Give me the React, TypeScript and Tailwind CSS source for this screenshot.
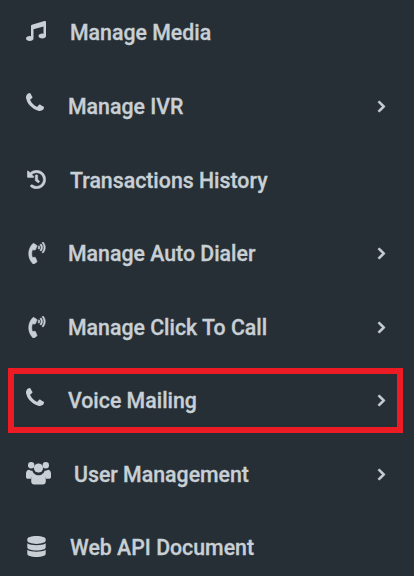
import { FaChevronRight, FaDatabase, FaHistory, FaMusic, FaPhoneVolume } from "react-icons/fa";

const PhoneIcon = () => (
  <svg width="18" height="18" viewBox="0 0 1408 1408" fill="currentColor">
    <path d="M1408 1112q0 27-10 70.5t-21 68.5q-21 50-122 106-94 51-186 51-27 0-53-3.5t-57.5-12.5-47-14.5-55.5-20.5-49-18q-98-35-175-83-127-79-264-216t-216-264q-48-77-83-175-3-9-18-49t-20.5-55.5-14.5-47-12.5-57.5-3.5-53q0-92 51-186 56-101 106-122 25-11 68.5-21t70.5-10q14 0 21 3 18 6 53 76 11 19 30 54t35 63.5 31 53.5q3 4 17.5 25t21.5 35.5 7 28.5q0 20-28.5 50t-62 55-62 53-28.5 46q0 9 5 22.5t8.5 20.5 14 24 11.5 19q76 137 174 235t235 174q2 1 19 11.5t24 14 20.5 8.5 22.5 5q18 0 46-28.5t53-62 55-62 50-28.5q14 0 28.5 7t35.5 21.5 25 17.5q25 15 53.5 31t63.5 35 54 30q70 35 76 53 3 7 3 21z" />
  </svg>
);

const UsersIcon = () => (
  <svg width="25" height="23" viewBox="0 0 25 23" fill="currentColor">
    <circle cx="5.2" cy="3.2" r="3.2" />
    <circle cx="19.8" cy="3.2" r="3.2" />
    <circle cx="12.5" cy="6" r="4.6" />
    <path d="M0 11.5c0-2.5 1.5-3.8 3-3.8 1 .8 2.2 1.2 3.4 1 .4 1.5 1.2 2.6 2.4 3.4-2 1-3.2 2.6-3.6 4.6H2c-1.2 0-2-.6-2-1.8z" />
    <path d="M25 11.5c0-2.5-1.5-3.8-3-3.8-1 .8-2.2 1.2-3.4 1-.4 1.5-1.2 2.6-2.4 3.4 2 1 3.2 2.6 3.6 4.6H23c1.200 0 2-.6 2-1.800z" />
    <path d="M8.400 11.800c1.100 1 2.500 1.500 4.100 1.500s3-.5 4.100-1.500c2 .3 3.200 2.400 3.200 6v1.700c0 2-1.300 3-3 3H8.200c-1.700 0-3-1-3-3v-1.700c0-3.600 1.200-5.700 3.200-6z" />
  </svg>
);

const menuItems = [
  { key: "media", name: "Manage Media", icon: <FaMusic size={20} />, slot: "w-[44px] pb-[3px]", arrow: false },
  { key: "ivr", name: "Manage IVR", icon: <PhoneIcon />, slot: "w-[42px] pb-[8px]", arrow: true },
  { key: "history", name: "Transactions History", icon: <FaHistory size={19} strokeWidth={14} />, slot: "w-[44px] pl-[1px] pb-[1px]", arrow: false },
  { key: "dialer", name: "Manage Auto Dialer", icon: <FaPhoneVolume size={22} strokeWidth={14} />, slot: "w-[42px] pb-[1px]", arrow: true },
  { key: "click", name: "Manage Click To Call", icon: <FaPhoneVolume size={22} strokeWidth={14} />, slot: "w-[42px] pb-[1px]", arrow: true },
  { key: "voice", name: "Voice Mailing", icon: <PhoneIcon />, slot: "w-[42px] pb-[8px]", arrow: true },
  { key: "users", name: "User Management", icon: <UsersIcon />, slot: "w-[48px] pb-[1px]", arrow: true },
  { key: "api", name: "Web API Document", icon: <FaDatabase size={21} />, slot: "w-[44px] pb-[3px]", arrow: false },
];

export default function App() {
  return (
    <div className="relative h-[576px] w-[414px] overflow-hidden bg-[#272f36] font-['Roboto',sans-serif] text-[#c8d0d5]">
      <ul className="-mt-[4px] flex flex-col">
        {menuItems.map((item) => (
          <li key={item.key} className="flex h-[73.6px] items-center pl-[26px] pr-[26px]">
            <span className={`${item.slot} flex shrink-0 items-center`}>{item.icon}</span>
            <span className="pt-[1px] text-[21.3px] font-medium [-webkit-text-stroke:0.3px]">{item.name}</span>
            {item.arrow && <FaChevronRight size={13} strokeWidth={30} className="ml-auto" />}
          </li>
        ))}
      </ul>
      <div className="absolute left-[8px] top-[368px] h-[65px] w-[395px] border-[6px] border-[#ed1c24]" />
    </div>
  );
}
